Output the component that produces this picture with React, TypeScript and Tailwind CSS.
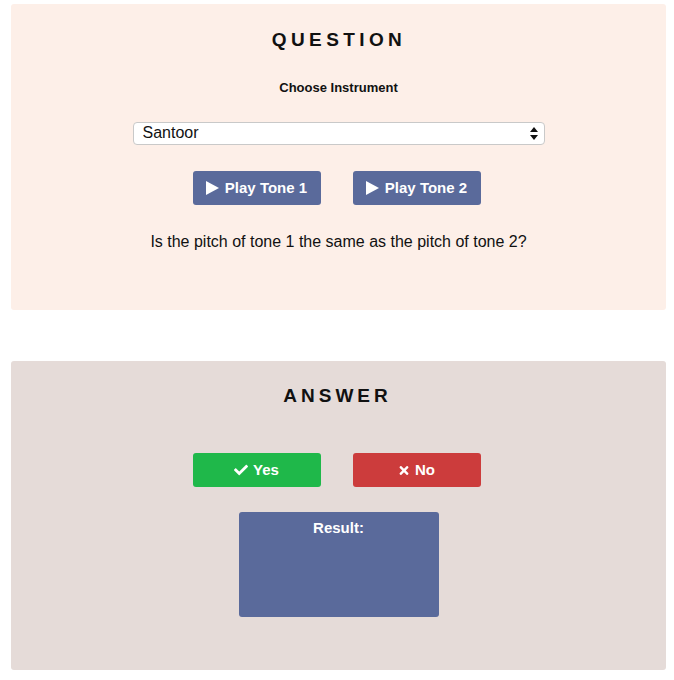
import { FaCheck, FaTimes } from "react-icons/fa";

function PlayIcon() {
    return (
        <svg width="13" height="14" viewBox="0 0 13 14" className="shrink-0">
            <path d="M0 0 L13 7 L0 14 Z" fill="currentColor" />
        </svg>
    );
}

function ToneButton({ label }: { label: string }) {
    return (
        <button className="flex h-[34px] w-[128px] items-center justify-center gap-[6px] rounded-[3px] bg-[#5a6a9b] text-[15px] font-bold text-white">
            <PlayIcon />
            <span>{label}</span>
        </button>
    );
}

export default function App() {
    return (
        <div className="min-h-[680px] bg-white pl-[11px] pr-[8px] pt-[4px] font-['Liberation_Sans',Arial,sans-serif] text-[#111]">
            <section className="flex h-[306px] flex-col items-center rounded-[3px] bg-[#fdefe8] pt-[25px]">
                <h1 className="h-[22px] pl-[1px] text-[19px] font-bold leading-[22px] tracking-[4.4px]">QUESTION</h1>
                <p className="mt-[29px] text-[13px] font-bold leading-[16px]">Choose Instrument</p>

                <div className="relative mt-[26px] h-[23px] w-[412px] rounded-[4px] border border-[#c9c9c9] bg-white">
                    <span className="absolute left-[9px] top-0 text-[16px] leading-[20px]">Santoor</span>
                    <svg width="8" height="13" viewBox="0 0 8 13" className="absolute right-[6px] top-[4px]">
                        <path d="M4 0 L8 5 L0 5 Z M0 8 L8 8 L4 13 Z" fill="#111" />
                    </svg>
                </div>

                <div className="mt-[26px] flex gap-[32px] pr-[4px]">
                    <ToneButton label="Play Tone 1" />
                    <ToneButton label="Play Tone 2" />
                </div>

                <p className="mt-[28px] text-[16px] leading-[18px]">
                    Is the pitch of tone 1 the same as the pitch of tone 2?
                </p>
            </section>

            <section className="mt-[51px] flex h-[309px] flex-col items-center rounded-[3px] bg-[#e5dbd8] pt-[24px]">
                <h2 className="h-[22px] pr-[2px] text-[19px] font-bold leading-[22px] tracking-[4px]">ANSWER</h2>

                <div className="mt-[46px] flex gap-[32px] pr-[4px]">
                    <button className="flex h-[34px] w-[128px] items-center justify-center gap-[5px] rounded-[3px] bg-[#1fb84a] text-[15px] font-bold text-white">
                        <FaCheck className="h-[14px] w-[14px]" />
                        <span>Yes</span>
                    </button>
                    <button className="flex h-[34px] w-[128px] items-center justify-center gap-[5px] rounded-[3px] bg-[#cc3c3c] text-[15px] font-bold text-white">
                        <FaTimes className="h-[13px] w-[12px]" />
                        <span>No</span>
                    </button>
                </div>

                <div className="mt-[25px] h-[105px] w-[200px] rounded-[3px] bg-[#5a6a9b] pt-[7px] text-center text-[15px] font-bold leading-[18px] text-white">
                    Result:
                </div>
            </section>
        </div>
    );
}
